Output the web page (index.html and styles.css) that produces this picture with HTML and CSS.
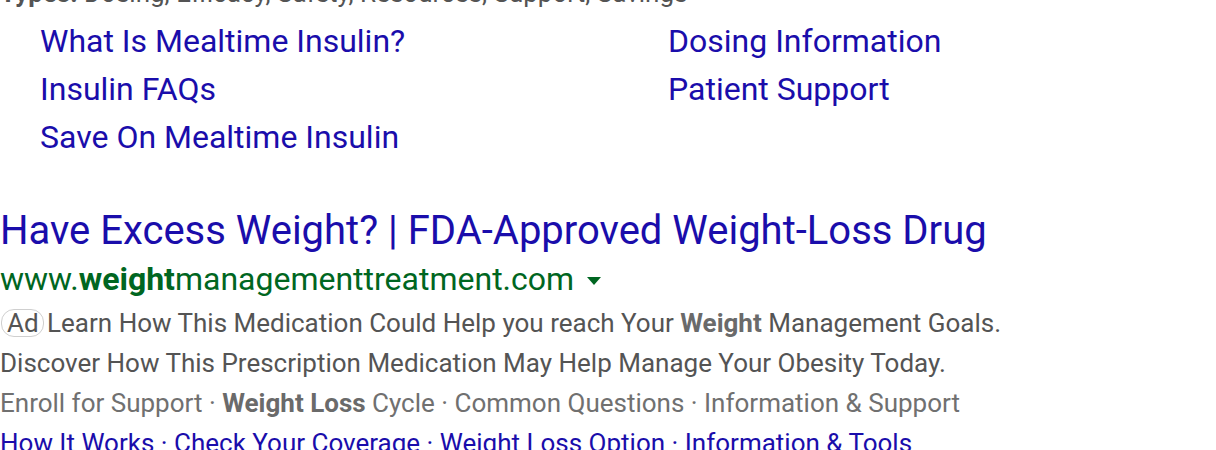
FILE: index.html
```html
<!DOCTYPE html>
<html>
<head>
<meta charset="utf-8">
<link rel="stylesheet" href="styles.css">
</head>
<body>
<div class="page">
  <div class="snippet"><b>Types:</b> Dosing, Efficacy, Safety, Resources, Support, Savings</div>
  <div class="sitelinks">
    <a class="sl" href="#">What Is Mealtime Insulin?</a>
    <a class="sl" href="#">Dosing Information</a>
    <a class="sl" href="#">Insulin FAQs</a>
    <a class="sl" href="#">Patient Support</a>
    <a class="sl" href="#">Save On Mealtime Insulin</a>
  </div>
  <div class="ad">
    <a class="title" href="#">Have Excess Weight? | FDA-Approved Weight-Loss Drug</a>
    <div class="url">www.<b>weight</b>managementtreatment.com<span class="caret"></span></div>
    <div class="desc"><span class="badge">Ad</span> Learn How This Medication Could Help you reach Your <b>Weight</b> Management Goals.</div>
    <div class="desc">Discover How This Prescription Medication May Help Manage Your Obesity Today.</div>
    <div class="desc light">Enroll for Support · <b>Weight Loss</b> Cycle · Common Questions · Information &amp; Support</div>
    <div class="links"><a href="#">How It Works</a> · <a href="#">Check Your Coverage</a> · <a href="#">Weight Loss Option</a> · <a href="#">Information &amp; Tools</a></div>
  </div>
</div>
</body>
</html>
```

FILE: styles.css
```css
html, body {
  margin: 0;
  padding: 0;
  background: #fff;
}
body {
  font-family: Roboto, "Liberation Sans", sans-serif;
  overflow: hidden;
  height: 450px;
}
.page {
  margin-top: -27px;
}
.snippet {
  font-size: 26px;
  line-height: 40px;
  color: #545454;
}
.snippet b {
  font-weight: 700;
}
.sitelinks {
  display: grid;
  grid-template-columns: 628px auto;
  padding-left: 40px;
  margin-top: 4px;
}
.sl {
  font-size: 32px;
  line-height: 48px;
  color: #1a0dab;
  text-decoration: none;
}
.ad {
  margin-top: 46px;
}
.title {
  display: block;
  font-size: 40px;
  line-height: 48px;
  color: #1a0dab;
  text-decoration: none;
}
.url {
  font-size: 32px;
  line-height: 48px;
  color: #006621;
  display: flex;
  align-items: center;
}
.url b {
  font-weight: 700;
}
.caret {
  width: 0;
  height: 0;
  border-left: 7px solid transparent;
  border-right: 7px solid transparent;
  border-top: 8px solid #006621;
  margin-left: 13px;
  margin-top: 4px;
}
.desc {
  font-size: 26px;
  line-height: 40px;
  color: #545454;
}
.desc b {
  color: #6a6a6a;
}
.desc.light {
  color: #707070;
}
.badge {
  display: inline-block;
  border: 1px solid #cfcfcf;
  border-radius: 13px;
  padding: 0 4px 0 5px;
  line-height: 26px;
  font-size: 26px;
  color: #545454;
  margin-left: 1px;
  margin-right: -3px;
}
.links {
  font-size: 26px;
  line-height: 40px;
  color: #1a0dab;
}
.links a {
  color: #1a0dab;
  text-decoration: none;
}
```
